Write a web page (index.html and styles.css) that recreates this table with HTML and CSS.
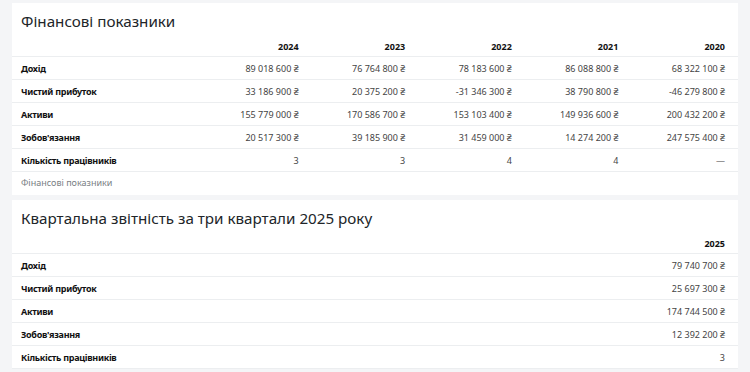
FILE: index.html
```html
<!DOCTYPE html>
<html lang="uk">
<head>
<meta charset="utf-8">
<link rel="stylesheet" href="styles.css">
</head>
<body>
<section class="card">
  <h2 class="card-title">Фінансові показники</h2>
  <table class="fin">
    <colgroup><col class="c-label"><col><col><col><col><col></colgroup>
    <thead>
      <tr><th></th><th>2024</th><th>2023</th><th>2022</th><th>2021</th><th>2020</th></tr>
    </thead>
    <tbody>
      <tr><th>Дохід</th><td>89 018 600 ₴</td><td>76 764 800 ₴</td><td>78 183 600 ₴</td><td>86 088 800 ₴</td><td>68 322 100 ₴</td></tr>
      <tr><th>Чистий прибуток</th><td>33 186 900 ₴</td><td>20 375 200 ₴</td><td>-31 346 300 ₴</td><td>38 790 800 ₴</td><td>-46 279 800 ₴</td></tr>
      <tr><th>Активи</th><td>155 779 000 ₴</td><td>170 586 700 ₴</td><td>153 103 400 ₴</td><td>149 936 600 ₴</td><td>200 432 200 ₴</td></tr>
      <tr><th>Зобов'язання</th><td>20 517 300 ₴</td><td>39 185 900 ₴</td><td>31 459 000 ₴</td><td>14 274 200 ₴</td><td>247 575 400 ₴</td></tr>
      <tr><th>Кількість працівників</th><td>3</td><td>3</td><td>4</td><td>4</td><td>—</td></tr>
    </tbody>
  </table>
  <p class="caption">Фінансові показники</p>
</section>
<section class="card">
  <h2 class="card-title">Квартальна звітність за три квартали 2025 року</h2>
  <table class="fin">
    <thead>
      <tr><th></th><th>2025</th></tr>
    </thead>
    <tbody>
      <tr><th>Дохід</th><td>79 740 700 ₴</td></tr>
      <tr><th>Чистий прибуток</th><td>25 697 300 ₴</td></tr>
      <tr><th>Активи</th><td>174 744 500 ₴</td></tr>
      <tr><th>Зобов'язання</th><td>12 392 200 ₴</td></tr>
      <tr><th>Кількість працівників</th><td>3</td></tr>
    </tbody>
  </table>
</section>
</body>
</html>
```
FILE: styles.css
```css
html, body {
  margin: 0;
  padding: 0;
}
body {
  background: #f4f5f7;
  font-family: "Noto Sans", "Open Sans", sans-serif;
  color: #212529;
  padding: 3px 12px 0;
  display: flex;
  flex-direction: column;
  gap: 5px;
}
.card {
  background: #fff;
}
.card-title {
  margin: 0;
  padding: 7px 9px 4px;
  font-size: 15.2px;
  line-height: 22px;
  font-weight: 400;
  color: #212529;
}
.fin {
  width: 100%;
  border-collapse: collapse;
  table-layout: fixed;
  font-size: 9px;
}
.c-label {
  width: 193px;
}
.fin th,
.fin td {
  height: 22px;
  padding: 0 13px 0 9px;
  border-bottom: 1px solid #eceef0;
  text-align: right;
  white-space: nowrap;
}
.fin thead th {
  height: 20px;
  font-weight: 700;
  color: #111;
}
.fin tbody th {
  text-align: left;
  font-weight: 700;
  color: #111;
  letter-spacing: -0.3px;
}
.fin td {
  color: #444;
}
.caption {
  margin: 0;
  padding: 5px 9px 6px;
  font-size: 9px;
  line-height: 12px;
  color: #7a7f85;
}
```
